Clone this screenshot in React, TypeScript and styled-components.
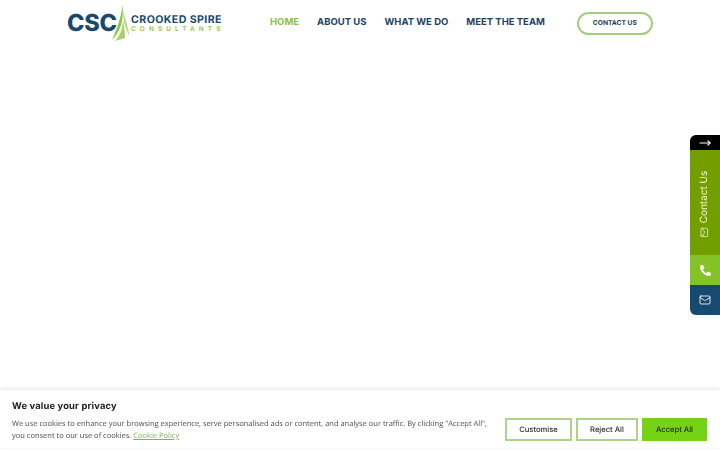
import React from "react";
import styled, { createGlobalStyle } from "styled-components";
import { Mail, MoveRight } from "lucide-react";
import { FaPhoneAlt } from "react-icons/fa";

const Global = createGlobalStyle`
  html, body { margin: 0; padding: 0; background: #fff; }
  body {
    font-family: Inter, "Liberation Sans", sans-serif;
    height: 450px;
    overflow: hidden;
    text-rendering: geometricPrecision;
  }
  * { box-sizing: border-box; }
`;

const Header = styled.header`
  display: flex;
  align-items: center;
  height: 45px;
  padding-left: 67px;
`;

const Logo = styled.a`
  display: flex;
  align-items: center;
  width: 156px;
  height: 45px;
`;

const LogoMark = styled.span`
  font: 800 23.5px/1 Inter, sans-serif;
  color: #17496b;
  letter-spacing: -0.2px;
  width: 41px;
  margin-top: 1px;
`;

const Spire = styled.svg`
  width: 23px;
  height: 36px;
  flex: none;
`;

const LogoText = styled.div`
  display: flex;
  flex-direction: column;
  margin-top: 1px;
`;

const LogoName = styled.span`
  font: 700 10.6px/11px Inter, sans-serif;
  color: #17496b;
  white-space: nowrap;
  letter-spacing: 0.42px;
`;

const LogoSub = styled.span`
  font: 600 6.4px/8px Inter, sans-serif;
  color: #8cc63f;
  letter-spacing: 4.15px;
  white-space: nowrap;
`;

const Nav = styled.nav`
  display: flex;
  align-items: center;
  gap: 18px;
  margin-left: 47px;
  margin-top: 1px;
`;

const NavLink = styled.a<{ $active?: boolean }>`
  font: 700 9.5px/14px Inter, sans-serif;
  color: ${(p) => (p.$active ? "#8abf4a" : "#1c4465")};
  white-space: nowrap;
`;

const ContactButton = styled.a`
  display: flex;
  align-items: center;
  justify-content: center;
  width: 76px;
  height: 23px;
  margin-left: 32px;
  margin-top: 1px;
  border: 2px solid #a4cc7a;
  border-radius: 12px;
  font: 700 6.7px/1 Inter, sans-serif;
  color: #1c3a52;
  white-space: nowrap;
`;

const SideTab = styled.aside`
  position: fixed;
  right: 0;
  top: 135px;
  width: 30px;
  display: flex;
  flex-direction: column;
  border-radius: 6px 0 0 6px;
  overflow: hidden;
`;

const SideItem = styled.div<{ $bg: string; $h: number }>`
  display: flex;
  align-items: center;
  justify-content: center;
  height: ${(p) => p.$h}px;
  background: ${(p) => p.$bg};
  color: #fff;
`;

const Vertical = styled.div`
  display: flex;
  align-items: center;
  gap: 4px;
  transform: rotate(-90deg);
  font: 400 10px/1 Inter, sans-serif;
  white-space: nowrap;
  margin-top: 2px;
  margin-left: -1px;
  color: #eef5da;
`;

const Banner = styled.section`
  position: fixed;
  left: 0;
  right: 0;
  bottom: 2px;
  height: 58px;
  background: #fff;
  box-shadow: 0 -1px 5px rgba(0, 0, 0, 0.1);
  padding: 10px 13px 0 12px;
`;

const Title = styled.h2`
  margin: 0;
  font: 700 9.4px/13px Inter, sans-serif;
  color: #212121;
  letter-spacing: 0.15px;
`;

const BannerBody = styled.div`
  display: flex;
  align-items: flex-start;
  justify-content: space-between;
  margin-top: 5px;
`;

const Copy = styled.p`
  margin: 0;
  width: 480px;
  font: 400 7.5px/12px "Open Sans", sans-serif;
  color: #4c4c4c;
`;

const PolicyLink = styled.a`
  color: #7fb24a;
  text-decoration: underline;
`;

const Buttons = styled.div`
  display: flex;
  gap: 4px;
`;

const CookieButton = styled.button<{ $w: number; $solid?: boolean }>`
  width: ${(p) => p.$w}px;
  height: 23px;
  padding: 0;
  border: 2px solid ${(p) => (p.$solid ? "#74d313" : "#add38a")};
  background: ${(p) => (p.$solid ? "#74d313" : "#fff")};
  font: 500 7.6px/1 Inter, sans-serif;
  color: #2b2b2b;
  text-rendering: geometricPrecision;
`;

export default function App() {
  return (
    <>
      <Global />
      <Header>
        <Logo>
          <LogoMark>CSC</LogoMark>
          <Spire viewBox="0 0 23 36">
            <path d="M14.5 0 C15.5 10 15 24 4 35 C8 26 13 14 14.5 0Z" fill="#8cc63f" />
            <path d="M14.5 5 C18 14 20.5 24 21.5 32 C19 26 17 21 15.6 17 C15.6 12 15.2 8 14.5 5Z" fill="#b9dc8c" />
            <path d="M14.6 15 C15 24 12 31 7 36 C10 35 14 34 17 33 C17 26 16 20 14.6 15Z" fill="#a6d16a" />
          </Spire>
          <LogoText>
            <LogoName>CROOKED SPIRE</LogoName>
            <LogoSub>CONSULTANTS</LogoSub>
          </LogoText>
        </Logo>
        <Nav>
          <NavLink $active>HOME</NavLink>
          <NavLink>ABOUT US</NavLink>
          <NavLink>WHAT WE DO</NavLink>
          <NavLink>MEET THE TEAM</NavLink>
        </Nav>
        <ContactButton>CONTACT US</ContactButton>
      </Header>
      <SideTab>
        <SideItem $bg="#000" $h={15}>
          <MoveRight size={12} strokeWidth={2.4} />
        </SideItem>
        <SideItem $bg="#729e00" $h={105}>
          <Vertical>
            <Mail size={10} strokeWidth={1.8} />
            Contact Us
          </Vertical>
        </SideItem>
        <SideItem $bg="#84c225" $h={30}>
          <FaPhoneAlt size={11} />
        </SideItem>
        <SideItem $bg="#174a70" $h={30}>
          <Mail size={12} strokeWidth={1.7} />
        </SideItem>
      </SideTab>
      <Banner>
        <Title>We value your privacy</Title>
        <BannerBody>
          <Copy>
            We use cookies to enhance your browsing experience, serve personalised ads or content, and analyse our traffic. By clicking "Accept All", you consent to our use of cookies. <PolicyLink>Cookie Policy</PolicyLink>
          </Copy>
          <Buttons>
            <CookieButton $w={67}>Customise</CookieButton>
            <CookieButton $w={62}>Reject All</CookieButton>
            <CookieButton $w={65} $solid>Accept All</CookieButton>
          </Buttons>
        </BannerBody>
      </Banner>
    </>
  );
}
